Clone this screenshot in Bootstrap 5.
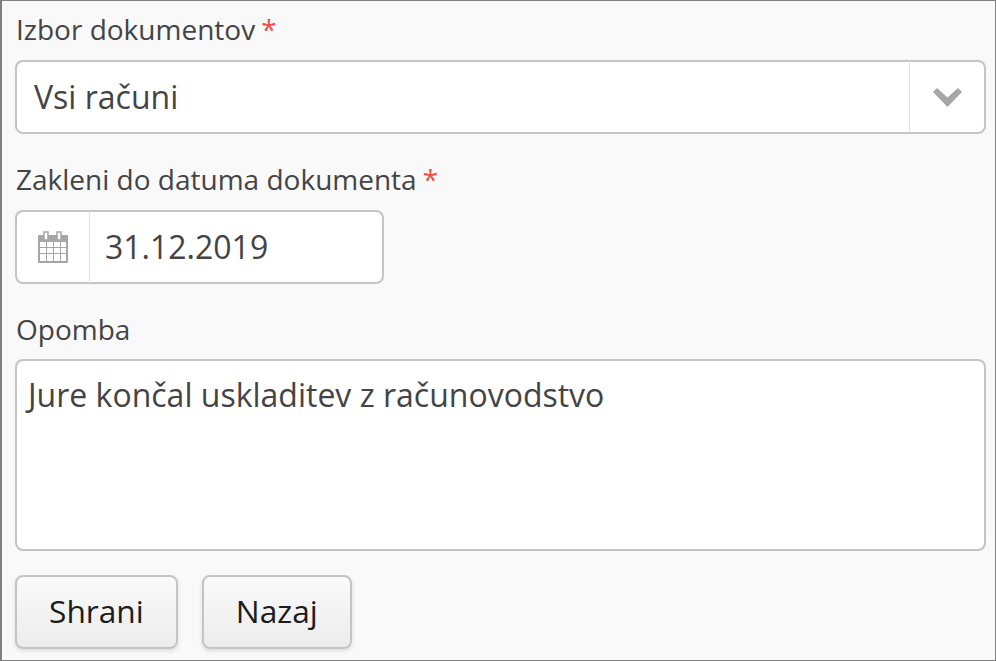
<!DOCTYPE html>
<html lang="sl">
<head>
  <meta charset="UTF-8" />
  <meta name="viewport" content="width=device-width, initial-scale=1.0"/>
  <title>Zakleni dokumente</title>
  <link href="https://cdn.jsdelivr.net/npm/bootstrap@5.3.3/dist/css/bootstrap.min.css" rel="stylesheet">
  <style>
    html, body {
      height: 100%;
    }
    body {
      background: #f9f9f9;
      font-family: "Open Sans", "Liberation Sans", sans-serif;
      color: #444;
    }
    .lock-panel {
      width: 996px;
      height: 661px;
      border: 1px solid #808080;
      border-left-width: 2px;
      padding: 12px 9px 0 13px;
    }
    .lock-label {
      font-size: 28px;
      line-height: 32px;
      margin-bottom: 15px;
      padding-left: 1px;
      color: #444;
      display: block;
    }
    .lock-req {
      color: #f04e45;
      margin-left: 6px;
    }
    .lock-group {
      height: 74px;
      margin-bottom: 29px;
    }
    .lock-group .form-control,
    .lock-group .input-group-text {
      border: 2px solid #c4c4c4;
      border-radius: 8px;
      background: #fff;
      color: #444;
      font-size: 32px;
    }
    .lock-select .form-control {
      border-right: 0;
      padding: 0 17px;
    }
    .lock-select .input-group-text {
      width: 78px;
      border-left: 2px solid #e0e0e0;
      justify-content: center;
      padding: 0;
    }
    .lock-date {
      width: 369px;
    }
    .lock-date .input-group-text {
      width: 76px;
      border-right: 2px solid #e0e0e0;
      justify-content: center;
      padding: 0;
    }
    .lock-date .form-control {
      border-left: 0;
      padding: 0 15px;
    }
    .lock-note {
      height: 192px;
      margin-top: -1px;
      border: 2px solid #c4c4c4;
      border-radius: 8px;
      color: #444;
      font-size: 32px;
      line-height: 44px;
      padding: 12px 11px;
      resize: none;
      margin-bottom: 24px;
    }
    .lock-btns {
      gap: 24px;
    }
    .lock-btn {
      height: 74px;
      border: 2px solid #c4c4c4;
      border-radius: 8px;
      background: linear-gradient(#fafafa, #ececec);
      box-shadow: 0 2px 4px rgba(0, 0, 0, .12);
      color: #1c1c1c;
      font-size: 31.7px;
      padding: 0 32px 3px;
    }
  </style>
</head>
<body>

<div class="lock-panel">
  <form>
    <label class="lock-label">Izbor dokumentov<span class="lock-req">*</span></label>
    <div class="input-group lock-group lock-select">
      <input type="text" class="form-control" value="Vsi računi" readonly>
      <span class="input-group-text">
        <svg width="29" height="20" viewBox="0 0 29 20"><path d="M0 5 L4 1 L14.5 10.5 L25 1 L29 5 L14.5 20 Z" fill="#a6a6a6"/></svg>
      </span>
    </div>

    <label class="lock-label">Zakleni do datuma dokumenta<span class="lock-req">*</span></label>
    <div class="input-group lock-group lock-date">
      <span class="input-group-text">
        <svg width="30" height="32" viewBox="0 0 30 32">
          <path d="M1 4 H29 Q30 4 30 5 V31 Q30 32 29 32 H1 Q0 32 0 31 V5 Q0 4 1 4 Z" fill="#a6a6a6"/>
          <path d="M6 1 h4 v8 h-4 Z M19 1 h4 v8 h-4 Z" fill="#fff" stroke="#a6a6a6" stroke-width="1.5"/>
          <path d="M2 11 h6 v5 h-6 Z M9 11 h6 v5 h-6 Z M16 11 h6 v5 h-6 Z M23 11 h5 v5 h-5 Z M2 17 h6 v5 h-6 Z M9 17 h6 v5 h-6 Z M16 17 h6 v5 h-6 Z M23 17 h5 v5 h-5 Z M2 23 h6 v7 h-6 Z M9 23 h6 v7 h-6 Z M16 23 h6 v7 h-6 Z M23 23 h5 v7 h-5 Z" fill="#fff"/>
        </svg>
      </span>
      <input type="text" class="form-control" value="31.12.2019">
    </div>

    <label class="lock-label">Opomba</label>
    <textarea class="form-control lock-note">Jure končal uskladitev z računovodstvo</textarea>

    <div class="d-flex lock-btns">
      <button type="button" class="btn lock-btn">Shrani</button>
      <button type="button" class="btn lock-btn">Nazaj</button>
    </div>
  </form>
</div>

<script src="https://cdn.jsdelivr.net/npm/bootstrap@5.3.3/dist/js/bootstrap.bundle.min.js"></script>
</body>
</html>
